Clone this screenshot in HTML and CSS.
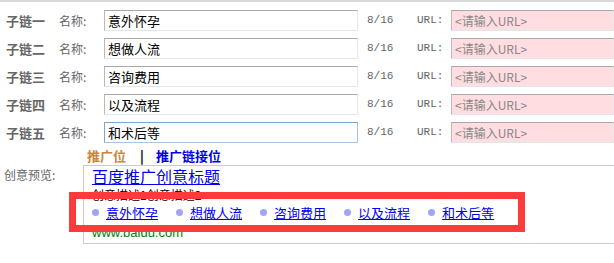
FILE: index.html
```html
<!DOCTYPE html>
<html lang="zh-CN">
<head>
    <meta charset="UTF-8">
    <title>子链设置</title>
    <link rel="stylesheet" href="styles.css">
</head>
<body>
    <div class="topline"></div>

    <div class="rows">
        <div class="row">
            <span class="row-label">子链一</span>
            <span class="name-label">名称:</span>
            <input class="name-input" type="text" value="意外怀孕">
            <span class="count">8/16</span>
            <span class="url-label">URL:</span>
            <input class="url-input" type="text" placeholder="<请输入URL>">
        </div>
        <div class="row">
            <span class="row-label">子链二</span>
            <span class="name-label">名称:</span>
            <input class="name-input" type="text" value="想做人流">
            <span class="count">8/16</span>
            <span class="url-label">URL:</span>
            <input class="url-input" type="text" placeholder="<请输入URL>">
        </div>
        <div class="row">
            <span class="row-label">子链三</span>
            <span class="name-label">名称:</span>
            <input class="name-input" type="text" value="咨询费用">
            <span class="count">8/16</span>
            <span class="url-label">URL:</span>
            <input class="url-input" type="text" placeholder="<请输入URL>">
        </div>
        <div class="row">
            <span class="row-label">子链四</span>
            <span class="name-label">名称:</span>
            <input class="name-input" type="text" value="以及流程">
            <span class="count">8/16</span>
            <span class="url-label">URL:</span>
            <input class="url-input" type="text" placeholder="<请输入URL>">
        </div>
        <div class="row">
            <span class="row-label">子链五</span>
            <span class="name-label">名称:</span>
            <input class="name-input focused" type="text" value="和术后等">
            <span class="count">8/16</span>
            <span class="url-label">URL:</span>
            <input class="url-input" type="text" placeholder="<请输入URL>">
        </div>
    </div>

    <div class="tabs">
        <span class="tab tab-orange">推广位</span>
        <span class="tab-sep">|</span>
        <span class="tab tab-blue">推广链接位</span>
    </div>

    <div class="preview">
        <span class="preview-label">创意预览:</span>
        <div class="preview-box">
            <a class="ad-title" href="#">百度推广创意标题</a>
            <div class="ad-desc">创意描述1创意描述2</div>
            <div class="ad-links">
                <span class="ad-link"><i class="dot"></i><a href="#">意外怀孕</a></span>
                <span class="ad-link"><i class="dot"></i><a href="#">想做人流</a></span>
                <span class="ad-link"><i class="dot"></i><a href="#">咨询费用</a></span>
                <span class="ad-link"><i class="dot"></i><a href="#">以及流程</a></span>
                <span class="ad-link"><i class="dot"></i><a href="#">和术后等</a></span>
            </div>
            <div class="ad-url">www.baidu.com</div>
        </div>
    </div>

    <!-- 标注框 -->
    <div class="highlight"></div>
</body>
</html>
```

FILE: styles.css
```css
body {
    margin: 0;
    padding: 0;
    background: #fff;
    font-family: "Noto Sans CJK SC", "DejaVu Sans", sans-serif;
    font-size: 12px;
    color: #333;
    position: relative;
    overflow: hidden;
}

.topline {
    height: 2px;
    background-color: #d9d9d9;
}

.rows {
    padding-top: 4px;
}

.row {
    display: flex;
    align-items: center;
    height: 28px;
}

.row-label {
    width: 53px;
    padding-left: 6px;
    font-size: 13px;
    font-weight: bold;
    color: #666;
}

.name-label {
    width: 45px;
    font-size: 12px;
    color: #666;
}

.name-input,
.url-input {
    box-sizing: border-box;
    height: 21px;
    margin: 0;
    padding: 0 3px;
    border: 1px solid #e2e7ec;
    border-top-color: #a9a9a9;
    border-left-color: #b9b9b9;
    font-family: "Noto Sans CJK SC", sans-serif;
    font-size: 13px;
    outline: none;
}

.name-input {
    width: 254px;
    color: #000;
}

.name-input.focused {
    border-color: #a9c6e0;
    border-top-color: #7fa6c8;
    border-left-color: #7fa6c8;
}

.count {
    width: 50px;
    margin-left: 9px;
    font-family: "Liberation Mono", monospace;
    font-size: 11px;
    color: #666;
}

.url-label {
    width: 34px;
    font-family: "Liberation Mono", monospace;
    font-size: 11px;
    color: #666;
}

.url-input {
    flex: 1;
    background-color: #ffdde1;
    font-size: 12px;
}

.url-input::placeholder {
    color: #888;
}

.tabs {
    height: 19px;
    padding-left: 87px;
    display: flex;
    align-items: center;
    font-size: 13px;
    font-weight: bold;
}

.tab-orange {
    color: #c9853c;
}

.tab-sep {
    margin: 0 12px 0 14px;
    color: #000;
}

.tab-blue {
    color: #0000ee;
}

.preview {
    display: flex;
}

.preview-label {
    width: 79px;
    padding-left: 4px;
    padding-top: 1px;
    font-size: 12px;
    color: #666;
}

.preview-box {
    flex: 1;
    height: 77px;
    padding-left: 8px;
    border: 1px solid #cccccc;
    border-right: none;
}

.ad-title {
    display: block;
    width: max-content;
    font-size: 16px;
    line-height: 21px;
    color: #0000ee;
}

.ad-desc {
    font-size: 12px;
    line-height: 16px;
    color: #000;
}

.ad-links {
    display: flex;
    align-items: center;
    height: 19px;
}

.ad-link {
    display: flex;
    align-items: center;
    margin-right: 18px;
}

.ad-link a {
    font-size: 13px;
    color: #0000ee;
}

.dot {
    width: 7px;
    height: 7px;
    border-radius: 50%;
    background-color: #a4a4f6;
    margin-right: 7px;
}

.ad-url {
    margin-top: 3px;
    font-family: "Liberation Sans", Arial, sans-serif;
    font-size: 13px;
    line-height: 15px;
    color: #008000;
}

.highlight {
    position: absolute;
    left: 69px;
    top: 192px;
    width: 442px;
    height: 26px;
    border: 7px solid #fe3b3b;
}
```
